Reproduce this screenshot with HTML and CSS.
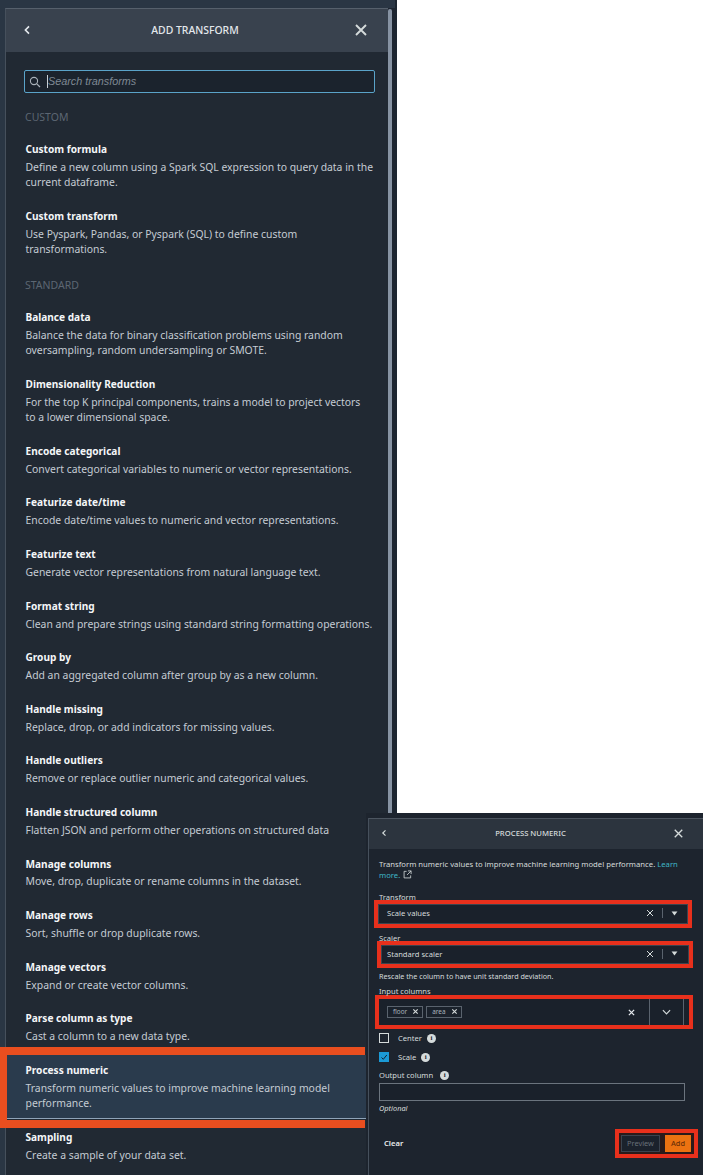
FILE: index.html
```html
<!DOCTYPE html>
<html lang="en">
<head>
<meta charset="utf-8">
<title>Add transform</title>
<link rel="stylesheet" href="styles.css">
</head>
<body>
<div class="page">
  <div class="left-col">
    <section class="panel">
      <header class="panel-head">
        <svg class="back" viewBox="0 0 10 12" width="8" height="10"><path d="M7.5 1.5 3 6l4.5 4.5" fill="none" stroke="#e6eaee" stroke-width="2"/></svg>
        <span class="panel-title">ADD TRANSFORM</span>
        <svg class="close" viewBox="0 0 12 12" width="12" height="12"><path d="M1 1l10 10M11 1 1 11" fill="none" stroke="#d5dbdb" stroke-width="1.9"/></svg>
      </header>
      <div class="panel-body">
        <div class="search">
          <svg viewBox="0 0 12 12" width="12" height="12"><circle cx="5" cy="5" r="3.6" fill="none" stroke="#aab2ba" stroke-width="1.1"/><path d="M7.8 7.8 11 11" stroke="#aab2ba" stroke-width="1.2"/></svg>
          <span class="caret"></span><span class="placeholder">Search transforms</span>
        </div>
        <h3 class="group first">CUSTOM</h3>
        <div class="item"><h4>Custom formula</h4><p>Define a new column using a Spark SQL expression to query data in the current dataframe.</p></div>
        <div class="item"><h4>Custom transform</h4><p>Use Pyspark, Pandas, or Pyspark (SQL) to define custom<br>transformations.</p></div>
        <h3 class="group">STANDARD</h3>
        <div class="item"><h4>Balance data</h4><p>Balance the data for binary classification problems using random oversampling, random undersampling or SMOTE.</p></div>
        <div class="item"><h4>Dimensionality Reduction</h4><p>For the top K principal components, trains a model to project vectors<br>to a lower dimensional space.</p></div>
        <div class="item"><h4>Encode categorical</h4><p>Convert categorical variables to numeric or vector representations.</p></div>
        <div class="item"><h4>Featurize date/time</h4><p>Encode date/time values to numeric and vector representations.</p></div>
        <div class="item"><h4>Featurize text</h4><p>Generate vector representations from natural language text.</p></div>
        <div class="item"><h4>Format string</h4><p>Clean and prepare strings using standard string formatting operations.</p></div>
        <div class="item"><h4>Group by</h4><p>Add an aggregated column after group by as a new column.</p></div>
        <div class="item"><h4>Handle missing</h4><p>Replace, drop, or add indicators for missing values.</p></div>
        <div class="item"><h4>Handle outliers</h4><p>Remove or replace outlier numeric and categorical values.</p></div>
        <div class="item"><h4>Handle structured column</h4><p>Flatten JSON and perform other operations on structured data</p></div>
        <div class="item"><h4>Manage columns</h4><p>Move, drop, duplicate or rename columns in the dataset.</p></div>
        <div class="item"><h4>Manage rows</h4><p>Sort, shuffle or drop duplicate rows.</p></div>
        <div class="item"><h4>Manage vectors</h4><p>Expand or create vector columns.</p></div>
        <div class="item"><h4>Parse column as type</h4><p>Cast a column to a new data type.</p></div>
        <div class="item active"><h4>Process numeric</h4><p>Transform numeric values to improve machine learning model<br>performance.</p></div>
        <div class="item"><h4>Sampling</h4><p>Create a sample of your data set.</p></div>
      </div>
    </section>
    <div class="scroll-track"><div class="scroll-thumb"></div></div>
  </div>

  <div class="mark-row"></div>

  <section class="sub">
    <header class="sub-head">
      <svg viewBox="0 0 10 12" width="6" height="8"><path d="M7.5 1.5 3 6l4.5 4.5" fill="none" stroke="#d5dbdb" stroke-width="2"/></svg>
      <span class="sub-title">PROCESS NUMERIC</span>
      <svg viewBox="0 0 12 12" width="9" height="9"><path d="M1 1l10 10M11 1 1 11" fill="none" stroke="#d5dbdb" stroke-width="1.8"/></svg>
    </header>
    <div class="sub-body">
      <p class="intro">Transform numeric values to improve machine learning model performance. <a class="link">Learn</a> <a class="link">more.</a>
        <svg class="ext" viewBox="0 0 10 10" width="9" height="9"><path d="M4 1.5H1.2v7.3h7.3V6M5.5 1h3.5v3.5M9 1 4.5 5.5" fill="none" stroke="#d5dbdb" stroke-width="0.9"/></svg></p>
      <label class="lbl l-transform">Transform</label>
      <div class="red r-transform">
        <div class="select"><span>Scale values</span>
          <span class="tools"><svg viewBox="0 0 8 8" width="8" height="8"><path d="M1 1l6 6M7 1 1 7" stroke="#d5dbdb" stroke-width="1"/></svg><i class="sep"></i><svg viewBox="0 0 8 6" width="7" height="5"><path d="M.5.5h7L4 5.5z" fill="#d5dbdb"/></svg></span></div>
      </div>
      <label class="lbl l-scaler">Scaler</label>
      <div class="red r-scaler">
        <div class="select"><span>Standard scaler</span>
          <span class="tools"><svg viewBox="0 0 8 8" width="8" height="8"><path d="M1 1l6 6M7 1 1 7" stroke="#d5dbdb" stroke-width="1"/></svg><i class="sep"></i><svg viewBox="0 0 8 6" width="7" height="5"><path d="M.5.5h7L4 5.5z" fill="#d5dbdb"/></svg></span></div>
      </div>
      <p class="help">Rescale the column to have unit standard deviation.</p>
      <label class="lbl l-input">Input columns</label>
      <div class="red r-input">
        <div class="multi">
          <span class="tag">floor<svg viewBox="0 0 8 8" width="7" height="7"><path d="M1.5 1.5l5 5M6.5 1.5l-5 5" stroke="#d5dbdb" stroke-width="1.3"/></svg></span>
          <span class="tag">area<svg viewBox="0 0 8 8" width="7" height="7"><path d="M1.5 1.5l5 5M6.5 1.5l-5 5" stroke="#d5dbdb" stroke-width="1.3"/></svg></span>
          <span class="multi-x"><svg viewBox="0 0 8 8" width="7" height="7"><path d="M1 1l6 6M7 1 1 7" stroke="#e6eaee" stroke-width="1.5"/></svg></span>
          <span class="multi-arrow"><svg viewBox="0 0 10 6" width="9" height="6"><path d="M1 1l4 4 4-4" fill="none" stroke="#d5dbdb" stroke-width="1.3"/></svg></span>
        </div>
      </div>
      <div class="check c-center"><span class="box"></span><span class="check-text">Center</span><span class="info">i</span></div>
      <div class="check c-scale"><span class="box on"><svg viewBox="0 0 10 10" width="10" height="10"><path d="M2.5 5.5 4.3 7.3 7.8 3" fill="none" stroke="#123" stroke-width="1"/></svg></span><span class="check-text">Scale</span><span class="info">i</span></div>
      <div class="lbl-row"><label class="lbl">Output column</label><span class="info">i</span></div>
      <div class="output"></div>
      <p class="optional">Optional</p>
      <div class="actions">
        <span class="clear">Clear</span>
        <div class="btn-mark"><span class="btn ghost">Preview</span><span class="btn add">Add</span></div>
      </div>
    </div>
  </section>
</div>
</body>
</html>
```
FILE: styles.css
```css
* { box-sizing: border-box; }
html, body { margin: 0; padding: 0; background: #fff; }
body { font-family: "Noto Sans", "Liberation Sans", sans-serif; }
.page { position: relative; width: 705px; height: 1175px; overflow: hidden; background: #fff; }
h3, h4, p { margin: 0; }

.left-col { display: flex; width: 397px; height: 1175px; background: #2a3644; padding: 8px 0 0 5px; border-right: 2px solid #1c2530; overflow: hidden; }
.panel { width: 383px; flex: none; border-top: 1px solid #56606c; border-left: 1px solid #46505c; background: #212933; }
.scroll-track { width: 7px; flex: none; padding: 1px 3px 0 0; background: #1d2530; }
.scroll-thumb { height: 1170px; background: #8793a3; border-radius: 2px 2px 0 0; }

.panel-head { display: flex; align-items: center; justify-content: space-between; height: 43px; padding: 0 21px 2px 17px; background: #39424e; }
.panel-title { margin-left: 4px; font-size: 10.4px; font-weight: 500; color: #e4e8ec; }
.panel-body { padding: 18px 13px 0 18px; }

.search { display: flex; align-items: center; height: 23px; width: 351px; border: 1px solid #5aa3c9; border-radius: 2px; background: #1b232d; padding-left: 4px; }
.caret { width: 1px; height: 13px; margin: -1px 0 0 6px; background: #c8ced4; }
.placeholder { margin-top: -2px; font-family: "Liberation Sans", sans-serif; font-style: italic; font-size: 10.8px; color: #7f8994; }

.group { padding-left: 1px; font-size: 10.5px; font-weight: 400; line-height: 14px; color: #5c6672; margin: 4.4px 0 16px; }
.group.first { margin-top: 17px; }

.item { padding: 0 0 16.4px 1.5px; }
.item h4 { font-size: 10.1px; font-weight: 700; line-height: 18px; color: #f4f6f8; }
.item p { margin-top: 1.9px; font-size: 10.4px; line-height: 15.3px; color: #c5ccd3; }
.item.active { margin: -6px -13px 0 -18px; padding: 6px 13px 6.9px 19.5px; background: #2a3b4d; border-bottom: 1px solid #8ea3b8; }
.item.active + .item { padding-top: 9px; }

.mark-row { position: absolute; left: 0; top: 1047px; width: 365px; height: 81px; border: solid #e94e1f; border-width: 8px 0 8px 7px; }

.sub { position: absolute; left: 366px; top: 813px; width: 337px; height: 362px; padding-top: 5px; background: #1d242e; }
.sub::before { content: ""; position: absolute; left: 2px; top: 5px; bottom: 0; width: 1px; background: #46505c; }
.sub-head { display: flex; align-items: center; justify-content: space-between; height: 31px; margin-left: 3px; padding: 0 20px 2px 12px; background: #2c343e; border-top: 1px solid #4c5560; }
.sub-title { font-size: 7.7px; font-weight: 500; color: #d5dbdb; }
.sub-body { position: relative; padding: 10px 18px 0 13px; color: #d5dbdb; font-size: 7.6px; }
.intro { line-height: 11px; font-size: 7.7px; }
.link { color: #3fb6c6; }
.ext { vertical-align: -1px; margin-left: 1px; }
.lbl { display: block; font-size: 7.6px; line-height: 10px; color: #d5dbdb; }
.l-transform { margin-top: 11px; }

.red { border: 4px solid #e8301c; }
.r-transform { margin: -2px -7px 0 -5px; height: 28px; }
.l-scaler { margin-top: 5px; }
.r-scaler { margin: -2px -8px 0 -2px; height: 27px; }
.select { display: flex; align-items: center; justify-content: space-between; height: 100%; padding: 0 9px 2px 8px; background: #1a212b; font-size: 7.6px; border: 1px solid #3c444e; }
.r-scaler .select { padding-left: 5px; padding-right: 10px; }
.tools { display: flex; align-items: center; }
.sep { width: 1px; height: 10px; margin: 0 8px 0 8px; background: #5a636e; }

.help { margin-top: 3px; line-height: 11px; font-size: 7.2px; }
.l-input { margin-top: 4px; }
.r-input { margin: -1px -8px 0 -4px; height: 34px; }
.multi { display: flex; align-items: center; gap: 3px; height: 100%; padding: 0 5px 0 8px; background: #1a212b; }
.tag { display: flex; align-items: center; gap: 5px; height: 12px; padding: 0 3px 2px 5px; border: 1px solid #5a636e; font-size: 6.4px; color: #a9b2bb; }
.multi-x { display: flex; justify-content: center; margin: 0 6px 0 auto; width: 18px; }
.multi-arrow { display: flex; align-items: center; justify-content: center; width: 35px; height: 100%; border: solid #5a636e; border-width: 0 1px; }

.check { display: flex; align-items: center; height: 12px; font-size: 7.6px; }
.c-center { margin-top: 3px; }
.c-scale { margin-top: 7px; }
.box { width: 10px; height: 10px; border: 1px solid #d5dbdb; margin-right: 9px; }
.box.on { border: 0; background: #1b9ad6; }
.check-text { margin-right: 5px; }
.info { display: inline-flex; align-items: center; justify-content: center; width: 9px; height: 9px; border-radius: 50%; background: #d5dbdb; color: #1d242e; font: 700 7px/9px "Liberation Serif", serif; }
.lbl-row { display: flex; align-items: center; gap: 7px; margin-top: 7px; }
.output { height: 18px; margin-top: 3px; border: 1px solid #6b747e; background: #1a212b; }
.optional { margin-top: 2px; font-size: 7.4px; line-height: 11px; font-style: italic; }

.actions { display: flex; align-items: center; justify-content: space-between; margin: 15px -13px 0 5px; }
.clear { margin-top: -2px; font-size: 7.6px; font-weight: 600; color: #eaeded; }
.btn-mark { display: flex; border: 4px solid #e8301c; padding: 2px 3px 2px 2px; background: #2a1a1a; }
.btn { display: flex; align-items: center; justify-content: center; height: 17px; padding-bottom: 2px; font-size: 7.4px; }
.ghost { width: 39px; margin-right: 5px; color: #687078; background: #1b222c; border: 1px solid #3a434e; }
.add { width: 26px; background: #ec7211; color: #6b2f08; font-weight: 500; }
```
